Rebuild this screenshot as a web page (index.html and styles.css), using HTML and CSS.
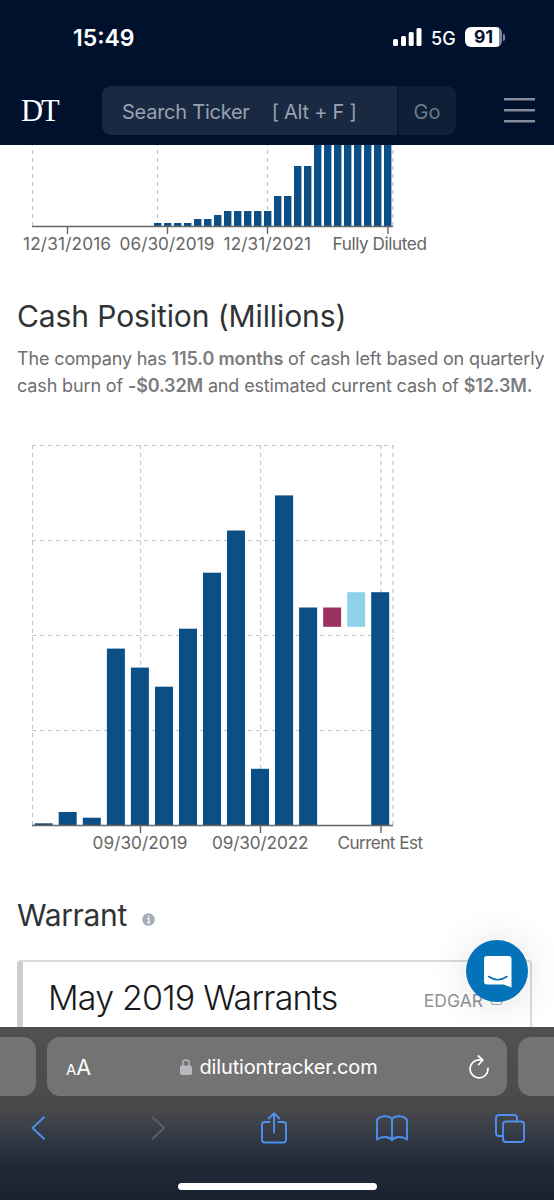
FILE: index.html
```
<!DOCTYPE html>
<html lang="en">
<head>
  <meta charset="UTF-8">
  <meta name="viewport" content="width=device-width, initial-scale=1.0">
  <title>Dilution Tracker</title>
  <link rel="stylesheet" href="styles.css">
</head>
<body>
  <div class="phone">
    <header class="top">
      <div class="status-bar">
        <span class="clock">15:49</span>
        <div class="status-icons">
          <svg class="signal" width="29" height="18" viewBox="0 0 29 18" fill="#fff">
            <rect x="0" y="11" width="5" height="7" rx="1.5"/>
            <rect x="8" y="8" width="5" height="10" rx="1.5"/>
            <rect x="15.700" y="4" width="5" height="14" rx="1.500"/>
            <rect x="23.500" y="0" width="5" height="18" rx="1.500"/>
          </svg>
          <span class="network">5G</span>
          <div class="battery"><span>91</span></div>
          <i class="battery-cap"></i>
        </div>
      </div>
      <nav class="nav">
        <div class="logo">DT</div>
        <div class="search">
          <div class="search-input"><span>Search Ticker</span><span>[ Alt + F ]</span></div>
          <button class="search-go">Go</button>
        </div>
        <div class="menu"><i></i><i></i><i></i></div>
      </nav>
    </header>

    <main class="content">
      <svg class="chart shares-chart" width="554" height="120" viewBox="0 145 554 120">
        <g class="grid">
          <path d="M32.500 226V145M157.500 226V145M267.500 226V145M393 226V145"/>
        </g>
        <g class="bar">
          <path d="M154 223h7.400v4h-7.400zM164 223h7.400v4h-7.400zM174 223h7.400v4h-7.400zM184 223h7.400v4h-7.400z"/>
          <path d="M194 219h7.400v8h-7.400zM204 219h7.400v8h-7.400zM214 215h7.400v12h-7.400z"/>
          <path d="M224 211h7.400v16h-7.400zM234 211h7.400v16h-7.400zM244 211h7.400v16h-7.400zM254 211h7.400v16h-7.400zM264 211h7.400v16h-7.400z"/>
          <path d="M274 196h7.400v31h-7.400zM284 196h7.400v31h-7.400zM294 166h7.400v61h-7.400zM304 166h7.400v61h-7.400z"/>
          <path d="M314 145h7.400v82h-7.400zM324 145h7.400v82h-7.400zM334 145h7.400v82h-7.400zM344 145h7.400v82h-7.400zM354 145h7.400v82h-7.400zM364 145h7.400v82h-7.400zM374 145h7.400v82h-7.400zM384 145h7.400v82h-7.400z"/>
        </g>
        <path class="axis" d="M32 226.500H393M67.500 226V234M167.500 226V234M267.500 226V234M388 226V234"/>
        <text x="23" y="250" textLength="88">12/31/2016</text>
        <text x="119.500" y="250" textLength="95">06/30/2019</text>
        <text x="223.500" y="250" textLength="87.500">12/31/2021</text>
        <text x="332.500" y="250" textLength="94.500">Fully Diluted</text>
      </svg>

      <section class="cash">
        <h2 class="cash-title">Cash Position (Millions)</h2>
        <p class="cash-text">
          The company has <b>115.0 months</b> of cash left based on quarterly<br>
          cash burn of <b>-$0.32M</b> and estimated current cash of <b>$12.3M.</b>
        </p>
      </section>

      <svg class="chart" width="554" height="430" viewBox="0 435 554 430">
        <g class="grid">
          <path d="M32 445.500H393M32 540.500H393M32 635.500H393M32 730.500H393"/>
          <path d="M32.500 825V445M140.500 825V445M260.500 825V445M381 825V445M393 825V445"/>
        </g>
        <g class="bar">
          <rect x="34.700" y="823.300" width="18" height="2.200"/>
          <rect x="58.700" y="812" width="18" height="13.500"/>
          <rect x="82.800" y="817.700" width="18" height="7.800"/>
          <rect x="106.900" y="648.600" width="18" height="176.900"/>
          <rect x="130.900" y="667.600" width="18" height="157.900"/>
          <rect x="155" y="686.700" width="18" height="138.800"/>
          <rect x="179" y="628.700" width="18" height="196.800"/>
          <rect x="203" y="572.700" width="18" height="252.800"/>
          <rect x="227" y="530.500" width="18" height="295"/>
          <rect x="251" y="768.800" width="18" height="56.700"/>
          <rect x="275" y="495.400" width="18.100" height="330.100"/>
          <rect x="299.100" y="607.500" width="18" height="218"/>
          <rect x="371.200" y="592.200" width="18" height="233.300"/>
        </g>
        <rect class="burn" x="323.200" y="607.500" width="17.900" height="19.300"/>
        <rect class="raised" x="347.200" y="592.200" width="17.900" height="34.600"/>
        <path class="axis" d="M32 825.500H393M140.500 825V833M260.500 825V833M381 825V833"/>
        <text x="92.500" y="848.500" textLength="95">09/30/2019</text>
        <text x="212" y="848.500" textLength="96.500">09/30/2022</text>
        <text x="337.500" y="848.500" textLength="85.500">Current Est</text>
      </svg>

      <section class="warrant">
        <h2 class="warrant-title"><span>Warrant</span>
          <svg width="13" height="13" viewBox="0 0 13 13">
            <circle cx="6.500" cy="6.500" r="6.300" fill="#a6adb8"/>
            <path d="M5.200 5.700h1.700v3.800M4.900 9.700h3.400M6.500 2.600v1.600" fill="none" stroke="#fff" stroke-width="1.300"/>
          </svg>
        </h2>
        <div class="card">
          <h3 class="card-title">May 2019 Warrants</h3>
          <span class="edgar">EDGAR <i class="edgar-icon"></i></span>
        </div>
      </section>

      <button class="chat">
        <svg width="28" height="32" viewBox="0 0 28 32">
          <path d="M3 0H24.500Q27.500 0 27.500 3V31.500L19.500 28.500H3Q0 28.500 0 25.500V3Q0 0 3 0Z" fill="#fff"/>
          <path d="M4.700 20.500Q13.700 27 23 20.500" fill="none" stroke="#0372b8" stroke-width="1.600" stroke-linecap="round"/>
        </svg>
      </button>
    </main>

    <footer class="browser">
      <div class="tabs">
        <div class="tab tab-prev"></div>
        <div class="tab tab-current">
          <span class="text-size"><small>A</small>A</span>
          <div class="address">
            <svg width="12" height="16" viewBox="0 0 12 16">
              <rect x="0" y="6.500" width="12" height="9.500" rx="1.800" fill="#b7b7bd"/>
              <path d="M2.700 7V4.200a3.300 3.300 0 0 1 6.600 0V7" fill="none" stroke="#b7b7bd" stroke-width="1.500"/>
            </svg>
            <span>dilutiontracker.com</span>
          </div>
          <svg class="reload" width="20" height="24" viewBox="0 0 20 24">
            <path d="M13 4.900H10A9 9 0 1 0 19 13.400M9.300 1l4.500 4-4.300 4.700" fill="none" stroke="#fff" stroke-width="1.700" stroke-linecap="round" stroke-linejoin="round"/>
          </svg>
        </div>
        <div class="tab tab-next"></div>
      </div>
      <div class="toolbar">
        <svg width="30" height="24" viewBox="-8 0 30 24"><path d="M13 1.300L1.500 12 13 22.700"/></svg>
        <svg class="disabled" width="30" height="24" viewBox="-10.500 0 30 24"><path d="M1 1.300L12.500 12 1 22.700"/></svg>
        <svg width="30" height="32" viewBox="-2.500 0 30 32"><path d="M9 10H4Q1.500 10 1.500 12.500V28Q1.500 30.500 4 30.500H23Q25.500 30.500 25.500 28V12.500Q25.500 10 23 10H18M13.500 20.500V1.500M8.300 6.500L13.500 1.200l5.200 5.300"/></svg>
        <svg width="32" height="26" viewBox="0 0 32 26"><path d="M16 4V25Q13 21.800 8.500 22 4 22 1 24.500V5Q3 1.500 8.500 1.200 14 1 16 4 18 1 23.500 1.200 29 1.500 31 5V24.500Q28 22 23.500 22 19 21.800 16 25"/></svg>
        <svg width="30" height="29" viewBox="0 0 30 29"><path d="M8 22H4Q1 22 1 19V4Q1 1 4 1H19Q22 1 22 4V7"/><rect x="8" y="7.500" width="21" height="20.500" rx="3"/></svg>
      </div>
      <div class="home-bar"></div>
    </footer>
  </div>
</body>
</html>
```
FILE: styles.css
```
:root {
  --navy: #00112d;
  --bar: #0b4f86;
  --ios-blue: #4f8ff0;
}

* {
  margin: 0;
  padding: 0;
  box-sizing: border-box;
}

body {
  background: #fff;
  font-family: Inter, "Liberation Sans", sans-serif;
}

button {
  border: none;
  font-family: inherit;
}

.phone {
  width: 554px;
  height: 1200px;
  display: flex;
  flex-direction: column;
  overflow: hidden;
}

/* status bar + site nav */
.top {
  height: 145px;
  flex: none;
  background: var(--navy);
  color: #fff;
}

.status-bar {
  height: 76px;
  display: flex;
  justify-content: space-between;
  padding: 0 49px 0 73px;
}

.clock {
  font-size: 23px;
  font-weight: 600;
  line-height: 76px;
}

.status-icons {
  height: 74px;
  display: flex;
  align-items: center;
}

.network {
  width: 25px;
  margin: 2px 9px 0;
  font-size: 18px;
  font-weight: 500;
}

.battery {
  width: 37px;
  height: 20px;
  border-radius: 6px;
  background: linear-gradient(90deg, #fff 91%, #7e8999 91%);
  color: var(--navy);
  font-size: 17.500px;
  font-weight: 700;
  line-height: 20px;
  text-align: center;
}

.battery-cap {
  width: 2px;
  height: 7px;
  margin-left: 1px;
  border-radius: 0 3px 3px 0;
  background: #7e8999;
}

.nav {
  height: 69px;
  display: flex;
  align-items: center;
}

.logo {
  width: 80px;
  height: 69px;
  padding-left: 21px;
  border-right: 1px solid #030d25;
  font-family: "Liberation Serif", serif;
  font-size: 30.500px;
  line-height: 70px;
  letter-spacing: -2px;
}

.search {
  width: 354px;
  height: 49px;
  margin-left: 22px;
  display: flex;
  border-radius: 9px;
  overflow: hidden;
}

.search-input {
  width: 295px;
  padding: 2px 0 0 20px;
  display: flex;
  align-items: center;
  gap: 22px;
  background: #1a2942;
  color: #98a1af;
  font-size: 20px;
  letter-spacing: -0.250px;
  white-space: nowrap;
}

.search-go {
  flex: 1;
  padding-top: 2px;
  border-left: 1px solid #06152e;
  background: #0e1f38;
  color: #6d798b;
  font-size: 20px;
}

.menu {
  width: 31px;
  margin-left: 48px;
  display: flex;
  flex-direction: column;
  gap: 8px;
}

.menu i {
  height: 3px;
  border-top: 2px solid #868e9b;
  background: #414d61;
}

/* page */
.content {
  position: relative;
  height: 882px;
  flex: none;
  overflow: hidden;
}

.chart {
  display: block;
}

.chart text {
  fill: #666;
  font-size: 17.200px;
}

.grid path {
  fill: none;
  stroke: #c4c4c4;
  stroke-width: 1.200;
  stroke-dasharray: 4 4;
}

.bar {
  fill: var(--bar);
}

.burn {
  fill: #9b315f;
}

.raised {
  fill: #8dd2e8;
}

.axis {
  fill: none;
  stroke: #666;
  stroke-width: 1.400;
}

.cash {
  height: 170px;
  padding: 31px 0 0 17px;
  white-space: nowrap;
}

.cash-title {
  height: 49px;
  color: #303336;
  font-size: 30px;
  font-weight: 400;
  line-height: 40px;
  letter-spacing: -0.100px;
}

.cash-text {
  color: #6e6e71;
  font-size: 18px;
  line-height: 27px;
  letter-spacing: -0.140px;
}

.cash-text b {
  color: #7c7c7e;
  font-weight: 600;
}

.warrant {
  padding: 29px 22px 0 17px;
}

.warrant-title {
  height: 66px;
  display: flex;
  gap: 15px;
  color: #303336;
  font-size: 30px;
  font-weight: 400;
  line-height: 42px;
  letter-spacing: -0.350px;
}

.warrant-title svg {
  margin-top: 19px;
}

.card {
  height: 120px;
  padding: 14px 28px 0 25px;
  display: flex;
  justify-content: space-between;
  border: 2px solid #dadada;
  border-left: 6px solid #cecece;
  border-radius: 4px;
}

.card-title {
  color: #17191c;
  font-size: 34px;
  font-weight: 300;
  line-height: 44px;
  letter-spacing: -0.800px;
  white-space: nowrap;
}

.edgar {
  display: flex;
  gap: 8px;
  color: #929295;
  font-size: 17.500px;
  line-height: 50px;
}

.edgar-icon {
  width: 11px;
  height: 11px;
  margin-top: 18px;
  border: 1px solid #aaa;
  border-radius: 2px;
}

.chat {
  position: absolute;
  right: 26px;
  bottom: 25px;
  width: 62px;
  height: 62px;
  padding: 2px 0 0 1px;
  display: flex;
  align-items: center;
  justify-content: center;
  border-radius: 50%;
  background: #0372b8;
  box-shadow: 0 2px 40px rgba(0, 0, 0, 0.13);
}

/* mobile browser controls */
.browser {
  height: 173px;
  flex: none;
  padding-top: 10px;
  display: flex;
  flex-direction: column;
  align-items: center;
  background: linear-gradient(#505050 0, #4b4b4b 70px, #46474a 85px, #333a45 110px, #212938 140px, #182230 173px);
}

.tabs {
  width: 554px;
  display: flex;
  gap: 11px;
}

.tab {
  height: 59px;
  background: #737374;
}

.tab-prev {
  width: 36px;
  border-radius: 0 13px 13px 0;
}

.tab-next {
  flex: 1;
  border-radius: 13px 0 0 13px;
}

.tab-current {
  width: 460px;
  padding: 0 18px 0 19px;
  display: flex;
  align-items: center;
  justify-content: space-between;
  border-radius: 13px;
  color: #fff;
}

.text-size {
  width: 27px;
  font-size: 21.500px;
}

.text-size small {
  font-size: 15px;
}

.address {
  margin-right: 5px;
  display: flex;
  align-items: center;
  gap: 8px;
  font-size: 20px;
  letter-spacing: -0.150px;
}

.toolbar {
  width: 502px;
  height: 64px;
  margin-right: 6px;
  display: flex;
  align-items: center;
  justify-content: space-between;
}

.toolbar svg {
  fill: none;
  stroke: var(--ios-blue);
  stroke-width: 1.900;
  stroke-linecap: round;
  stroke-linejoin: round;
}

.toolbar .disabled {
  stroke: #5b5d62;
}

.home-bar {
  width: 199px;
  height: 7px;
  margin-top: 23px;
  border-radius: 4px;
  background: #fff;
}
```
